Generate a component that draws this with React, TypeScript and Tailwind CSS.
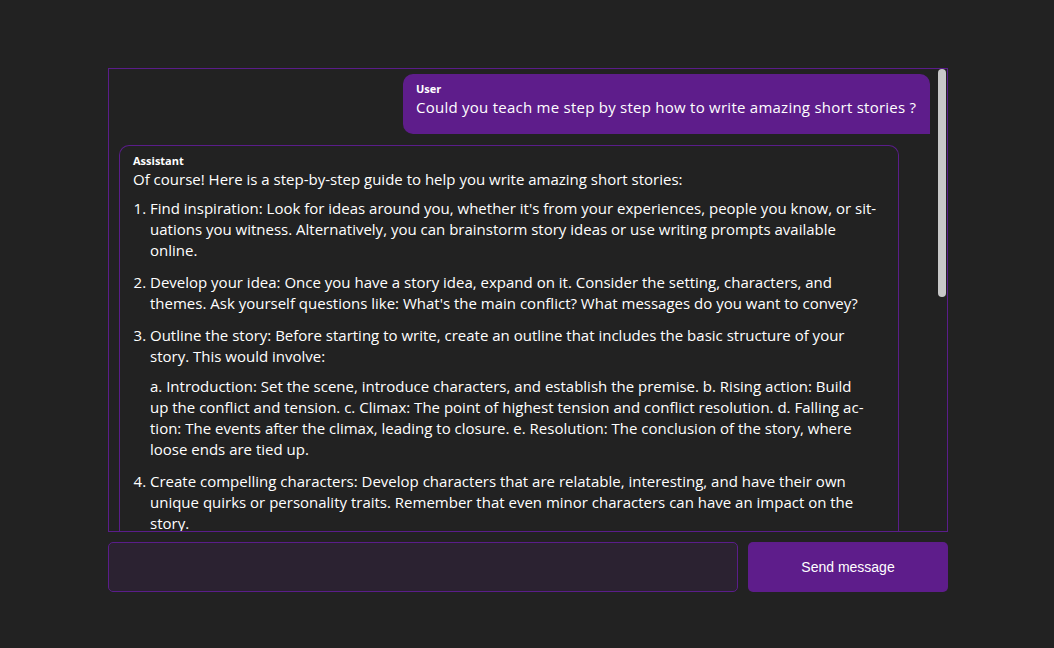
import React from "react";

const L = ({ children }: { children: React.ReactNode }) => (
  <span className="block whitespace-nowrap">{children}</span>
);

export default function App() {
  return (
    <div
      className="min-h-[648px] w-full bg-[#222222] pt-[68px]"
      style={{ fontFamily: '"Open Sans", "Noto Sans", sans-serif' }}
    >
      <div className="ml-[108px] w-[840px]">
        <div className="relative h-[464px] overflow-hidden border border-[#5a1d8a]">
          <div className="flex flex-col pl-[10px] pr-[17px] pt-[5px]">
            <div className="self-end w-[527px] h-[60px] rounded-[10px] rounded-br-none bg-[#5e1d8b] px-[13px] pt-[8px] text-white">
              <div className="text-[11px] font-bold leading-[14px]">User</div>
              <div className="text-[15px] leading-[21px] mt-[1px] tracking-[0.25px]">
                Could you teach me step by step how to write amazing short stories ?
              </div>
            </div>
            <div className="mt-[11px] w-[780px] rounded-t-[10px] border border-b-0 border-[#5a1d8a] px-[13px] pt-[8px] pb-[40px] text-white">
              <div className="text-[11px] font-bold leading-[14px]">Assistant</div>
              <div className="text-[15px] leading-[21px]">
                <p className="mt-[1px]">
                  Of course! Here is a step-by-step guide to help you write amazing short stories:
                </p>
                <ol className="mt-[8px] list-decimal pl-[17px]">
                  <li>
                    <L>Find inspiration: Look for ideas around you, whether it's from your experiences, people you know, or sit-</L>
                    <L>uations you witness. Alternatively, you can brainstorm story ideas or use writing prompts available</L>
                    <L>online.</L>
                  </li>
                  <li className="mt-[11px]">
                    <L>Develop your idea: Once you have a story idea, expand on it. Consider the setting, characters, and</L>
                    <L>themes. Ask yourself questions like: What's the main conflict? What messages do you want to convey?</L>
                  </li>
                  <li className="mt-[11px]">
                    <L>Outline the story: Before starting to write, create an outline that includes the basic structure of your</L>
                    <L>story. This would involve:</L>
                    <div className="mt-[9px]">
                      <L>a. Introduction: Set the scene, introduce characters, and establish the premise. b. Rising action: Build</L>
                      <L>up the conflict and tension. c. Climax: The point of highest tension and conflict resolution. d. Falling ac-</L>
                      <L>tion: The events after the climax, leading to closure. e. Resolution: The conclusion of the story, where</L>
                      <L>loose ends are tied up.</L>
                    </div>
                  </li>
                  <li className="mt-[11px]">
                    <L>Create compelling characters: Develop characters that are relatable, interesting, and have their own</L>
                    <L>unique quirks or personality traits. Remember that even minor characters can have an impact on the</L>
                    <L>story.</L>
                  </li>
                </ol>
              </div>
            </div>
          </div>
          <div className="absolute right-[1px] top-0 h-[228px] w-[8px] rounded-full bg-[#c8c8c8]" />
        </div>
        <div className="mt-[10px] flex h-[50px] gap-[10px]">
          <div className="h-full flex-1 rounded-[5px] border border-[#5a1d8a] bg-[#2b2231]" />
          <button
            className="h-full w-[200px] rounded-[5px] bg-[#5e1d8b] text-[14px] text-white"
            style={{ fontFamily: '"Liberation Sans", Arial, sans-serif' }}
          >
            Send message
          </button>
        </div>
      </div>
    </div>
  );
}
